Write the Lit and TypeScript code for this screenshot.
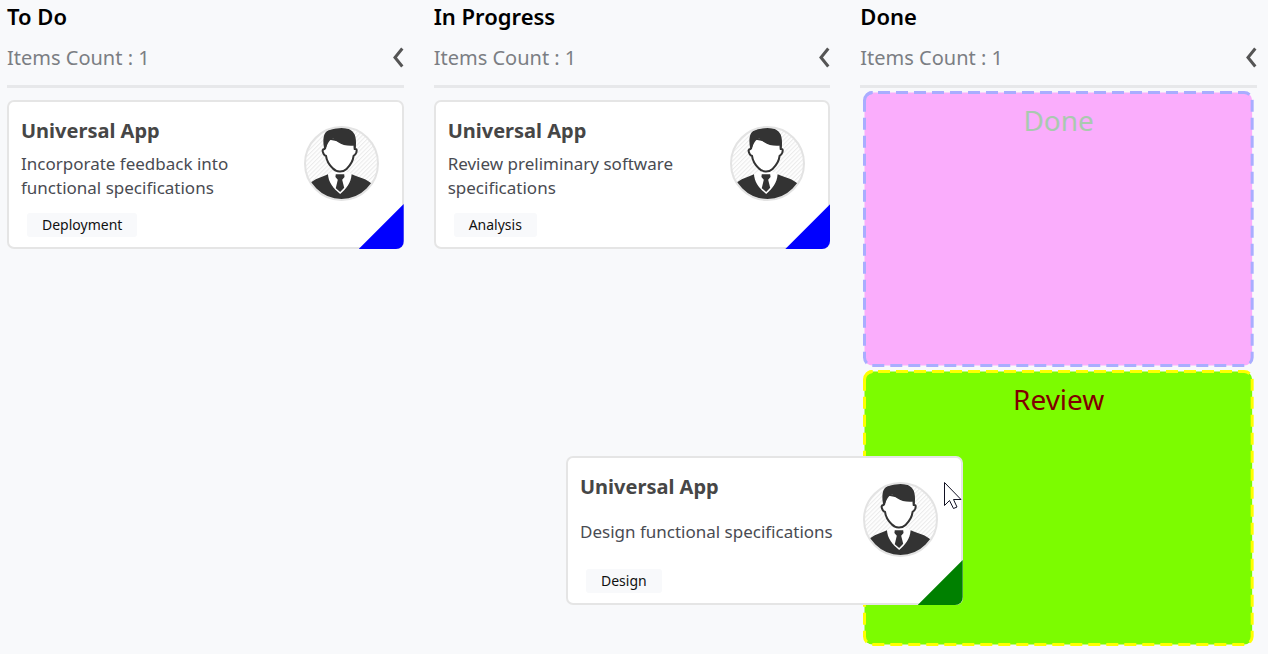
import { LitElement, html, css, svg } from "lit";
import { customElement, property } from "lit/decorators.js";

interface Item {
  title: string;
  description: string;
  tag: string;
}

interface Column {
  title: string;
  items: Item[];
}

const columns: Column[] = [
  {
    title: "To Do",
    items: [
      {
        title: "Universal App",
        description: "Incorporate feedback into functional specifications",
        tag: "Deployment",
      },
    ],
  },
  {
    title: "In Progress",
    items: [
      {
        title: "Universal App",
        description: "Review preliminary software specifications",
        tag: "Analysis",
      },
    ],
  },
  { title: "Done", items: [] },
];

const avatar = svg`
  <defs>
    <pattern id="hatch" width="9" height="9" patternUnits="userSpaceOnUse" patternTransform="rotate(45)">
      <rect width="9" height="9" fill="#fefefe" />
      <rect width="3" height="9" fill="#ebebeb" />
    </pattern>
    <clipPath id="disc"><circle cx="122" cy="131" r="107" /></clipPath>
  </defs>
  <circle cx="122" cy="131" r="107" fill="url(#hatch)" />
  <g clip-path="url(#disc)">
    <path d="M82 164 L92 156 L144 156 L152 164 L148 190 L118 221 L88 190 Z" fill="#fff" />
    <path d="M72 88 C65 88 65 94 68 100 C70 106 73 108 76 108 C78 124 86 136 96 145 C107 157 125 158 137 147 C149 136 156 124 158 108 C162 107 164 103 166 98 C168 91 167 87 161 88 L160 72 L80 56 Z" fill="#fff" stroke="#333" stroke-width="6" stroke-linejoin="round" />
    <path d="M71 88 C67 68 67 48 76 38 C84 28 100 26 116 25 C142 23 160 36 163 52 C166 64 165 76 164 88 L160 78 C142 80 124 77 112 68 C104 63 100 59 97 56 C87 61 80 70 76 88 Z" fill="#333" />
    <path d="M10 245 L26 192 C42 176 64 172 82 163 C83 186 98 206 118 221 C136 206 150 190 152 163 C170 172 198 176 212 192 L235 245 Z" fill="#333" />
    <path d="M105 163 L130 163 L131 171 L124 179 L130 203 L118 215 L105 204 L111 179 L104 171 Z" fill="#333" />
  </g>
  <circle cx="122" cy="131" r="108" fill="none" stroke="#e3e3e3" stroke-width="6" />
`;

@customElement("kanban-card")
export class KanbanCard extends LitElement {
  @property() heading = "";
  @property() description = "";
  @property() tag = "";

  static styles = css`
    :host {
      display: block;
      --marker: #00f;
    }
    .card {
      position: relative;
      display: flex;
      justify-content: space-between;
      padding: 15px 23px 10px 12px;
      background: #fff;
      border: 2px solid #e5e5e5;
      border-radius: 7px;
    }
    .title {
      margin: 0;
      font-size: 20px;
      line-height: 28px;
      font-weight: 700;
      color: #464646;
    }
    .description {
      display: flex;
      align-items: center;
      width: 256px;
      min-height: 48px;
      margin: 7px 0 13px;
      font-size: 17px;
      line-height: 24px;
      color: #494b52;
    }
    .tag {
      display: block;
      width: fit-content;
      margin-left: 6px;
      padding: 0 15px;
      font-size: 14px;
      line-height: 24px;
      color: #111;
      background: #f8f9fb;
      border-radius: 3px;
    }
    .avatar {
      flex: none;
      width: 75px;
      height: 75px;
      margin-top: 9px;
    }
    .marker {
      position: absolute;
      right: -2px;
      bottom: -2px;
      width: 45px;
      height: 45px;
      background: var(--marker);
      clip-path: polygon(100% 0, 100% 100%, 0 100%);
      border-bottom-right-radius: 8px;
    }
  `;

  render() {
    return html`
      <article class="card">
        <div>
          <h3 class="title">${this.heading}</h3>
          <p class="description">${this.description}</p>
          <span class="tag">${this.tag}</span>
        </div>
        <svg class="avatar" viewBox="11 20 222 222" aria-hidden="true">${avatar}</svg>
        <span class="marker"></span>
      </article>
    `;
  }
}

@customElement("drop-zone")
export class DropZone extends LitElement {
  @property() label = "";

  static styles = css`
    :host {
      display: block;
    }
    .zone {
      display: grid;
      height: 276px;
    }
    .frame,
    .label {
      grid-area: 1 / 1;
    }
    .frame {
      width: 100%;
      height: 100%;
      overflow: visible;
    }
    .box {
      x: 1.5px;
      y: 1.5px;
      width: calc(100% - 3px);
      height: calc(100% - 3px);
      fill: var(--fill);
      stroke: var(--line);
      stroke-width: 3px;
      stroke-dasharray: 12 6;
      stroke-dashoffset: 12.5px;
    }
    .corner {
      fill: none;
      stroke: var(--line);
      stroke-width: 3px;
    }
    .label {
      justify-self: center;
      margin-top: 9px;
      font-size: 28px;
      line-height: 40px;
      color: var(--ink);
    }
  `;

  render() {
    return html`
      <div class="zone">
        <svg class="frame" aria-hidden="true">
          <rect class="box" rx="8" ry="8" />
          <path class="corner" d="M1.5 9.5 A8 8 0 0 1 9.5 1.5" />
        </svg>
        <span class="label">${this.label}</span>
      </div>
    `;
  }
}

@customElement("app-root")
export class AppRoot extends LitElement {
  static styles = css`
    :host {
      display: block;
      position: relative;
      min-height: 100vh;
      overflow: hidden;
      background: #f8f9fb;
      font-family: "Noto Sans", "Open Sans", sans-serif;
    }
    .board {
      display: grid;
      grid-template-columns: repeat(3, minmax(0, 1fr));
      gap: 30px;
      padding: 0 11px 0 7px;
    }
    .header {
      border-bottom: 3px solid #e7e8ea;
      padding-bottom: 12px;
    }
    .name {
      margin: 0;
      font-size: 22px;
      line-height: 33px;
      font-weight: 600;
      color: #000;
    }
    .summary {
      display: flex;
      align-items: center;
      justify-content: space-between;
      margin-top: 9px;
      font-size: 20px;
      line-height: 31px;
      color: #7b7e83;
    }
    .collapse {
      display: flex;
      padding: 0;
      border: 0;
      background: none;
      color: #555;
    }
    .cards {
      margin-top: 12px;
    }
    .zones {
      display: grid;
      gap: 3px;
      margin: 3px 3px 0;
    }
    .done {
      --fill: #faadfc;
      --line: #a9adff;
      --ink: #a9c9af;
    }
    .review {
      --fill: #7cfc00;
      --line: #ffff00;
      --ink: #800000;
    }
    .dragged {
      position: absolute;
      left: 566px;
      top: 456px;
      width: calc((100% - 78px) / 3);
      --marker: #008000;
    }
    .cursor {
      position: absolute;
      left: 943px;
      top: 481px;
    }
  `;

  private renderColumn(column: Column) {
    return html`
      <section>
        <header class="header">
          <h2 class="name">${column.title}</h2>
          <div class="summary">
            <span>Items Count : 1</span>
            <button class="collapse" aria-label="Collapse ${column.title}">
              <svg width="13" height="21" viewBox="0 0 13 21" fill="none" stroke="currentColor" stroke-width="3">
                <path d="M11.3 1.5 L4 10.5 L11.3 19.5" />
              </svg>
            </button>
          </div>
        </header>
        ${column.items.length
          ? html`<div class="cards">
              ${column.items.map(
                (item) => html`<kanban-card
                  .heading=${item.title}
                  .description=${item.description}
                  .tag=${item.tag}
                ></kanban-card>`
              )}
            </div>`
          : html`<div class="zones">
              <drop-zone class="done" label="Done"></drop-zone>
              <drop-zone class="review" label="Review"></drop-zone>
            </div>`}
      </section>
    `;
  }

  render() {
    return html`
      <main class="board">${columns.map((column) => this.renderColumn(column))}</main>
      <kanban-card
        class="dragged"
        heading="Universal App"
        description="Design functional specifications"
        tag="Design"
      ></kanban-card>
      <svg class="cursor" width="20" height="30" viewBox="0 0 20 30" aria-hidden="true">
        <path
          d="M1.5 1.5 V24.5 L6.5 19.5 L10.5 27.5 L14 26 L10.5 18.5 H18 Z"
          fill="#fff"
          stroke="#112"
          stroke-width="1"
        />
      </svg>
    `;
  }
}
